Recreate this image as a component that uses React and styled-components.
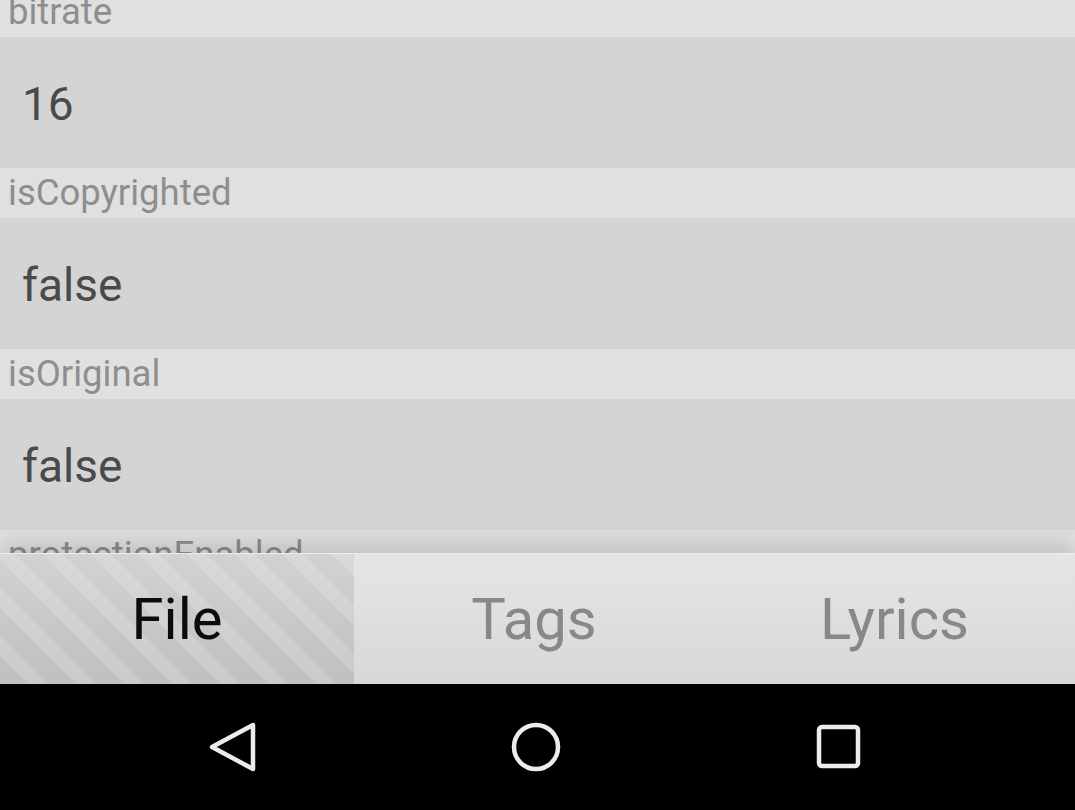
import React from "react";
import styled, { createGlobalStyle } from "styled-components";

const GlobalStyle = createGlobalStyle`
  html, body {
    margin: 0;
    padding: 0;
    background: #000;
  }
  body {
    font-family: Roboto, "Noto Sans", "Liberation Sans", sans-serif;
  }
`;

const Screen = styled.div`
  width: 1075px;
  height: 810px;
  display: flex;
  flex-direction: column;
  overflow: hidden;
  background: #d4d4d4;
`;

const List = styled.div`
  height: 553px;
  overflow: hidden;
  flex-shrink: 0;
`;

const ListInner = styled.div`
  margin-top: -13px;
`;

const Label = styled.div`
  height: 50px;
  background: #e0e0e0;
  color: #8e8e8e;
  font-size: 36.5px;
  line-height: 50px;
  padding-left: 8px;
  white-space: nowrap;
`;

const Value = styled.div`
  height: 131px;
  box-sizing: border-box;
  padding-top: 3px;
  background: #d4d4d4;
  color: #4a4a4a;
  font-size: 46px;
  display: flex;
  align-items: center;
  padding-left: 22px;
`;

const TabBar = styled.div`
  height: 131px;
  flex-shrink: 0;
  display: flex;
  border-top: 1px solid #eeeeee;
  box-sizing: border-box;
  background: linear-gradient(#e5e5e5, #d8d8d8);
  box-shadow: 0 -10px 22px rgba(0, 0, 0, 0.14);
  z-index: 1;
`;

const Tab = styled.div`
  width: ${(p) => p.w}px;
  display: flex;
  align-items: center;
  justify-content: center;
  font-size: 58px;
  color: ${(p) => (p.active ? "#0c0c0c" : "#888888")};
  background: ${(p) =>
    p.active
      ? `repeating-linear-gradient(45deg, rgba(255,255,255,0) 0 20px, rgba(255,255,255,0.16) 20px 34px),
         linear-gradient(#d2d2d2, #c0c0c0)`
      : "transparent"};
`;

const NavBar = styled.div`
  flex: 1;
  background: #000;
  display: flex;
  align-items: center;
  padding-left: 81px;
`;

const NavButton = styled.div`
  width: 303px;
  height: 60px;
  display: flex;
  align-items: center;
  justify-content: center;
`;

// last row is scrolled under the tab bar, only its label peeks out
const rows = [
  { label: "bitrate", value: "16" },
  { label: "isCopyrighted", value: "false" },
  { label: "isOriginal", value: "false" },
  { label: "protectionEnabled" },
];

const stroke = { fill: "none", stroke: "#ececec", strokeWidth: 4.5, strokeLinejoin: "round" };

export default function App() {
  return (
    <>
      <GlobalStyle />
      <Screen>
        <List>
          <ListInner>
            {rows.map((r) => (
              <React.Fragment key={r.label}>
                <Label>{r.label}</Label>
                {r.value && <Value>{r.value}</Value>}
              </React.Fragment>
            ))}
          </ListInner>
        </List>
        <TabBar>
          <Tab w={354} active>
            File
          </Tab>
          <Tab w={360}>Tags</Tab>
          <Tab w={361}>Lyrics</Tab>
        </TabBar>
        <NavBar>
          <NavButton>
            <svg width="60" height="60" viewBox="0 0 60 60">
              <path d="M50 8 L50 52 L9 30 Z" {...stroke} />
            </svg>
          </NavButton>
          <NavButton>
            <svg width="60" height="60" viewBox="0 0 60 60">
              <circle cx="30" cy="30" r="22" {...stroke} />
            </svg>
          </NavButton>
          <NavButton>
            <svg width="60" height="60" viewBox="0 0 60 60">
              <rect x="10" y="10" width="39" height="39" rx="3" {...stroke} />
            </svg>
          </NavButton>
        </NavBar>
      </Screen>
    </>
  );
}
